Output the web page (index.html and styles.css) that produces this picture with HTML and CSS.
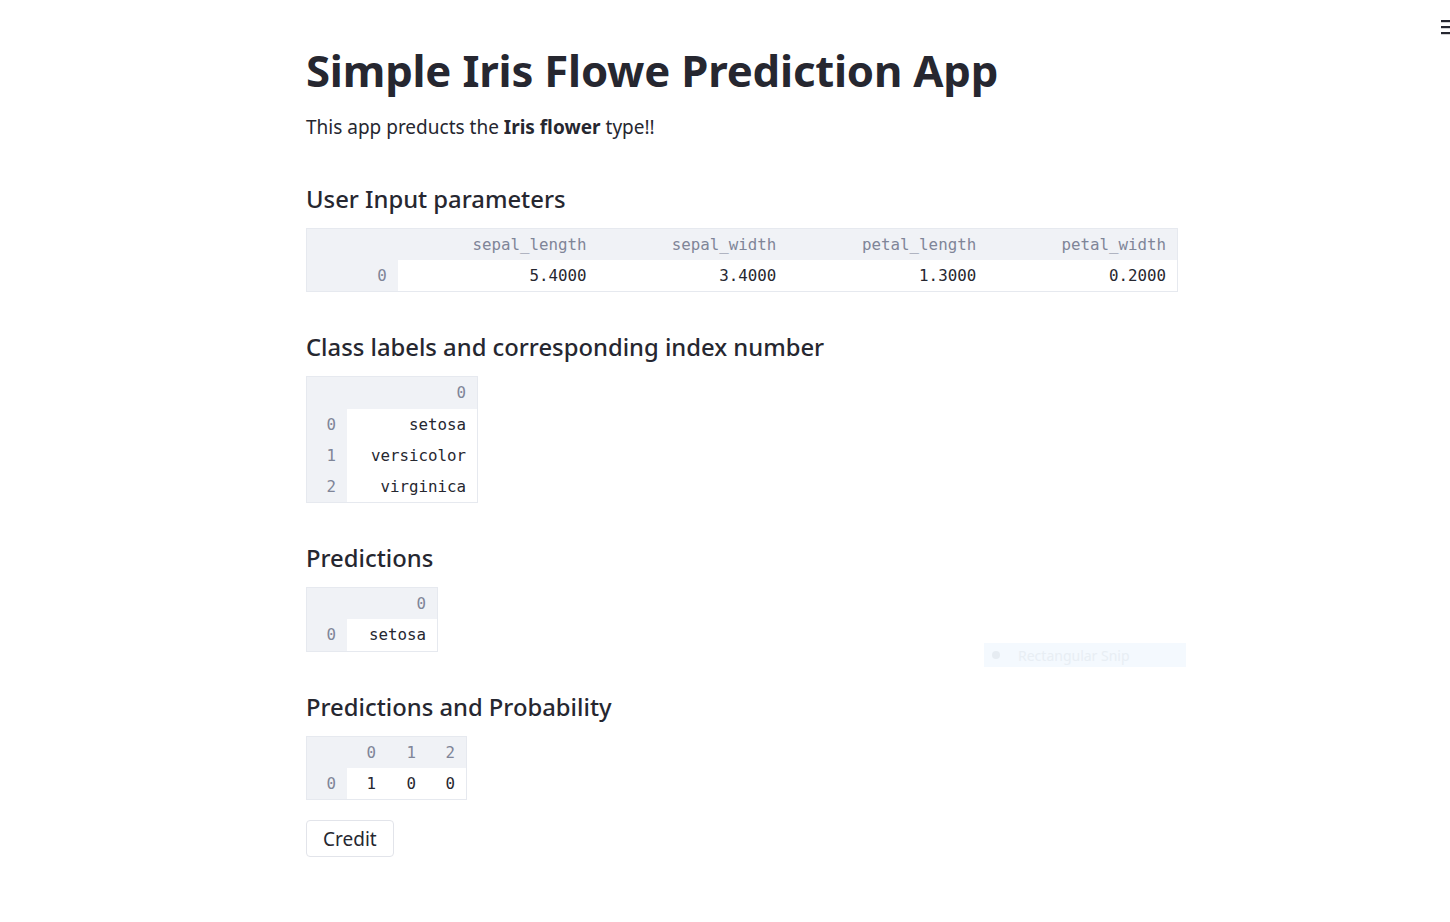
FILE: index.html
```
<!DOCTYPE html>
<html>
<head>
<meta charset="utf-8">
<link rel="stylesheet" href="styles.css">
</head>
<body>
<button class="menu" aria-label="menu">
  <svg width="10" height="16" viewBox="0 0 10 16"><rect x="0" y="1" width="10" height="2.2" fill="#262730"/><rect x="0" y="7" width="10" height="2.2" fill="#262730"/><rect x="0" y="13" width="10" height="2.2" fill="#262730"/></svg>
</button>
<main class="main">
  <h1 class="title">Simple Iris Flowe Prediction App</h1>
  <p class="lead">This app preducts the <strong>Iris flower</strong> type!!</p>

  <h3 class="sub sub-first">User Input parameters</h3>
  <table class="df df-wide">
    <thead><tr><th class="blank"></th><th>sepal_length</th><th>sepal_width</th><th>petal_length</th><th>petal_width</th></tr></thead>
    <tbody><tr><th>0</th><td>5.4000</td><td>3.4000</td><td>1.3000</td><td>0.2000</td></tr></tbody>
  </table>

  <h3 class="sub">Class labels and corresponding index number</h3>
  <table class="df df-labels">
    <thead><tr><th class="blank"></th><th>0</th></tr></thead>
    <tbody>
      <tr><th>0</th><td>setosa</td></tr>
      <tr><th>1</th><td>versicolor</td></tr>
      <tr><th>2</th><td>virginica</td></tr>
    </tbody>
  </table>

  <h3 class="sub">Predictions</h3>
  <table class="df df-pred">
    <thead><tr><th class="blank"></th><th>0</th></tr></thead>
    <tbody><tr><th>0</th><td>setosa</td></tr></tbody>
  </table>

  <h3 class="sub">Predictions and Probability</h3>
  <table class="df df-prob">
    <thead><tr><th class="blank"></th><th>0</th><th>1</th><th>2</th></tr></thead>
    <tbody><tr><th>0</th><td>1</td><td>0</td><td>0</td></tr></tbody>
  </table>

  <button class="btn">Credit</button>
</main>
<div class="snip"><span class="snip-dot"></span><span class="snip-text">Rectangular Snip</span></div>
</body>
</html>
```
FILE: styles.css
```
html, body {
  margin: 0;
  padding: 0;
  background: #ffffff;
}
body {
  font-family: "Noto Sans", "Open Sans", sans-serif;
  color: #262730;
  position: relative;
  min-height: 922px;
}
.menu {
  position: absolute;
  top: 19px;
  left: 1441px;
  padding: 0;
  border: 0;
  background: transparent;
  line-height: 0;
}
.main {
  width: 872px;
  margin-left: 306px;
  padding-top: 40px;
  display: flex;
  flex-direction: column;
  align-items: flex-start;
}
.title {
  margin: 0;
  font-size: 43.7px;
  font-weight: 700;
  line-height: 60px;
  letter-spacing: -0.2px;
}
.lead {
  margin: 12px 0 0;
  font-size: 19px;
  font-weight: 400;
  line-height: 30px;
}
.lead strong { font-weight: 700; }
.sub {
  margin: 39px 0 0;
  font-size: 23.8px;
  font-weight: 500;
  line-height: 32px;
}
.sub-first { margin-top: 41px; }
.df {
  margin-top: 13px;
  border-collapse: separate;
  border-spacing: 0;
  border: 1px solid #e6e9ef;
  font-family: "DejaVu Sans Mono", "Liberation Mono", monospace;
  font-size: 15.8px;
}
.df th, .df td {
  padding: 0 11px 0 0;
  line-height: 31.2px;
  text-align: right;
  white-space: nowrap;
}
.df th {
  background: #f0f2f6;
  color: #7f8598;
  font-weight: 400;
}
.df td {
  color: #262730;
}
.df tbody th { width: 29px; }
.df-wide { width: 872px; }
.df-wide tbody th { width: 80px; }
.df-wide thead th:nth-child(2) { width: 189px; }
.df-wide thead th:nth-child(3) { width: 179px; }
.df-wide thead th:nth-child(4) { width: 189px; }
.df-wide thead th:nth-child(5) { width: 179px; }
.df-labels td { width: 119px; }
.df-pred td { width: 79px; }
.df-prob td { width: 29px; }
.df-prob td:last-child { width: 28px; }
.btn {
  margin-top: 20px;
  padding: 0 16px;
  height: 37px;
  background: #ffffff;
  border: 1px solid #e2e4ea;
  border-radius: 4px;
  font-family: "Noto Sans", "Open Sans", sans-serif;
  font-size: 19px;
  color: #262730;
}
.snip {
  position: absolute;
  left: 984px;
  top: 643px;
  width: 202px;
  height: 24px;
  background: #f4f9fe;
  display: flex;
  align-items: center;
  font-family: "Noto Sans", sans-serif;
  font-size: 14px;
  color: #e8eef4;
}
.snip-dot {
  width: 8px;
  height: 8px;
  border-radius: 50%;
  background: #e6ecf2;
  margin: 0 18px 0 8px;
}
```
